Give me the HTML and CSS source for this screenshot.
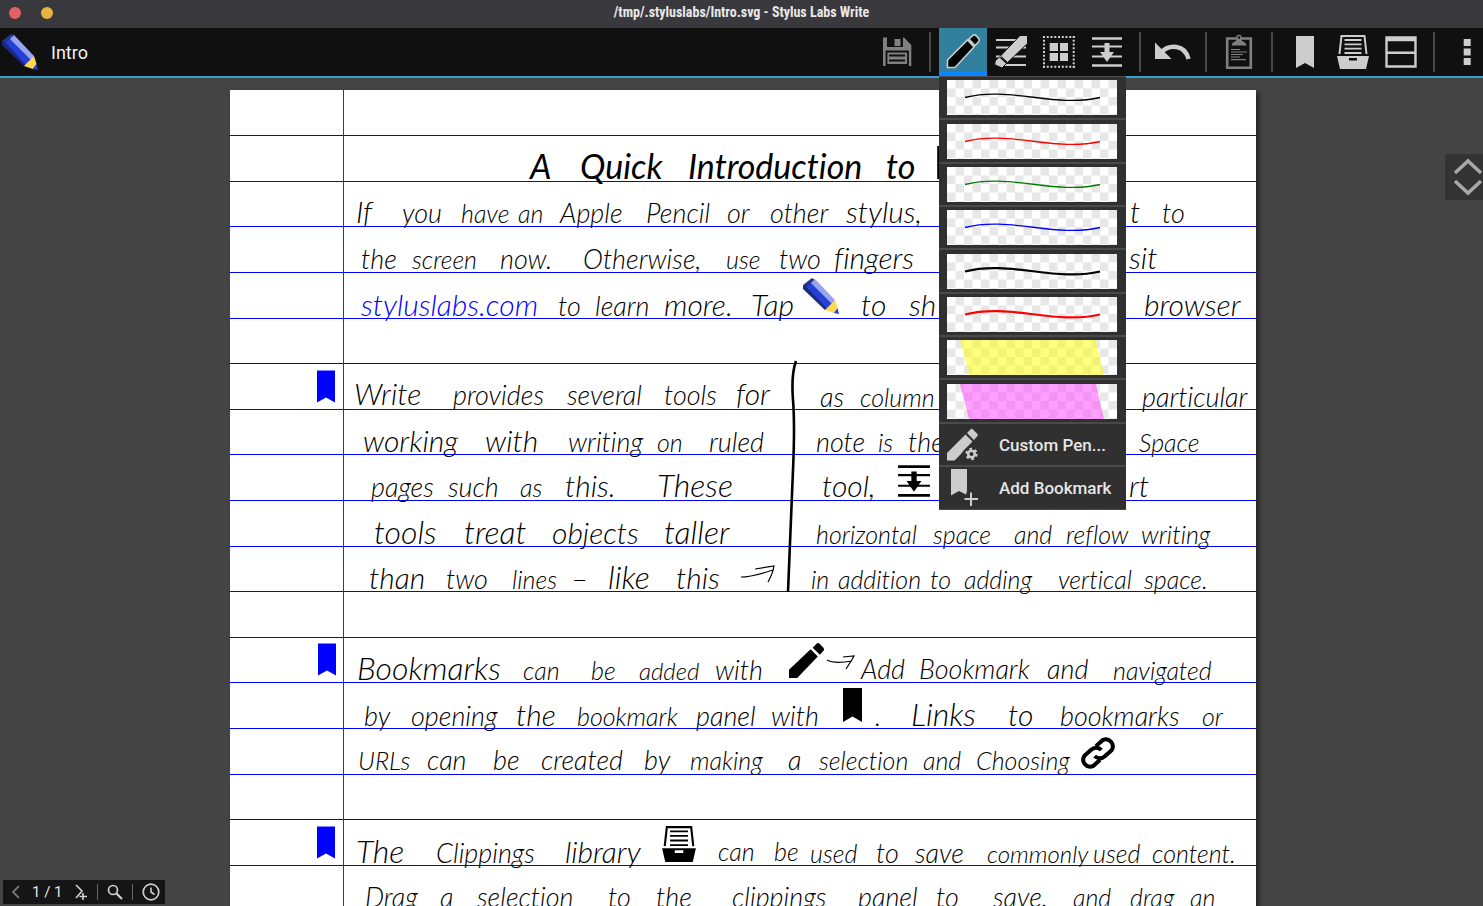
FILE: index.html
```html
<!DOCTYPE html>
<html lang="en">
<head>
<meta charset="utf-8">
<title>/tmp/.styluslabs/Intro.svg - Stylus Labs Write</title>
<link rel="stylesheet" href="styles.css">
</head>
<body>
<svg class="defs" aria-hidden="true">
  <defs>
    <pattern id="checker" width="17" height="17" patternUnits="userSpaceOnUse">
      <rect width="17" height="17" fill="#fff"/>
      <path d="M8.500 0H17V8.500H8.500zM0 8.500H8.500V17H0z" fill="#e7e7e7"/>
    </pattern>
    <symbol id="logo" viewBox="0 0 36 36">
      <path d="M0 7L9 0L12 2L4 10z" fill="#23358f"/>
      <path d="M4 9L9 4L30 26L22.500 32z" fill="#2540d6"/>
      <path d="M0 7L4 9L24 31L22 32L0 11z" fill="#1a2a80"/>
      <path d="M12 1L32 22L30 27L8 5z" fill="#98a5ee"/>
      <path d="M32 22L34.500 30L31 35L22 32L28 26z" fill="#ffd955"/>
      <path d="M34.500 30L36 36L31 35z" fill="#2540d6"/>
    </symbol>
    <symbol id="space" viewBox="0 0 32 32">
      <path d="M1 2.500H31M1 29.500H31" stroke="currentColor" stroke-width="2.500"/>
      <path d="M1 10.500H31M1 20.500H31" stroke="currentColor" stroke-width="2"/>
      <path d="M13.500 7H18.500V16H23L16 26L9 16H13.500z" fill="currentColor"/>
    </symbol>
    <symbol id="ribbon" viewBox="0 0 18 32">
      <path d="M0 0H18V32L9 27L0 32z" fill="currentColor"/>
    </symbol>
    <symbol id="tray" viewBox="0 0 34 35">
      <path d="M3.500 20L5.500 2H28.500L30.500 20" fill="none" stroke="currentColor" stroke-width="2"/>
      <path d="M8.500 6H25.500M8.500 10.300H25.500M8.500 14.700H25.500M8.500 19H25.500" stroke="currentColor" stroke-width="1.800"/>
      <path fill-rule="evenodd" d="M1 22H33L30 35H4zM13 24V26.500H21V24z" fill="currentColor"/>
    </symbol>
    <symbol id="pen" viewBox="0 0 34 34">
      <path d="M0 34V26L21 6L28 13L8 34zM23 4.500L27 .500Q28.500 -.500 30 1L33.500 4.500Q34.500 6 33.500 7.500L30 11.500z" fill="currentColor"/>
    </symbol>
  </defs>
</svg>

<div class="app">
  <header class="titlebar">
    <div class="lights"><button class="light close" aria-label="Close"></button><button class="light minimise" aria-label="Minimise"></button></div>
    <h1 class="window-title">/tmp/.styluslabs/Intro.svg - Stylus Labs Write</h1>
  </header>

  <nav class="toolbar" aria-label="Tools">
    <button class="home" aria-label="Documents"><svg width="36" height="36"><use href="#logo"/></svg></button>
    <span class="doc-name">Intro</span>
    <button class="tool dim" aria-label="Save"><svg viewBox="0 0 48 48">
      <path d="M10 9.500H31L38.300 17V38H10z" fill="currentColor"/>
      <path d="M14 9H30V19H14z" class="ground"/><path d="M21.500 11H27.500V18H21.500z" fill="currentColor"/>
      <path d="M13.500 23.500H35V37H13.500z" fill="currentColor" class="cut"/>
      <path d="M16 27.500H32M16 32.500H32" class="cut"/></svg></button>
    <span class="sep"></span>
    <div class="pen-holder">
      <button class="tool active" aria-label="Pen" aria-expanded="true"><svg viewBox="0 0 48 48">
        <path d="M8.500 39.500V32L28.500 12L35 19L16 39.500zM30 11L34.500 7Q35.500 6.500 37 7.500L40 11Q40.500 12.500 39.500 14L36 17.500z" fill="#000" stroke="#ccc" stroke-width="1.600"/></svg></button>
      <div class="menu">
        <button class="item" aria-label="Black fine pen"><svg class="swatch" viewBox="0 0 170 35" preserveAspectRatio="none"><rect width="170" height="35" fill="url(#checker)"/><path d="M18 17.500C62 6 108 28 153 17.500" class="ink" stroke="#000"/></svg></button>
        <button class="item" aria-label="Red fine pen"><svg class="swatch" viewBox="0 0 170 35" preserveAspectRatio="none"><rect width="170" height="35" fill="url(#checker)"/><path d="M18 17.500C62 6 108 28 153 17.500" class="ink" stroke="#f00"/></svg></button>
        <button class="item" aria-label="Green fine pen"><svg class="swatch" viewBox="0 0 170 35" preserveAspectRatio="none"><rect width="170" height="35" fill="url(#checker)"/><path d="M18 17.500C62 6 108 28 153 17.500" class="ink" stroke="#007d00"/></svg></button>
        <button class="item" aria-label="Blue fine pen"><svg class="swatch" viewBox="0 0 170 35" preserveAspectRatio="none"><rect width="170" height="35" fill="url(#checker)"/><path d="M18 17.500C62 6 108 28 153 17.500" class="ink" stroke="#00f"/></svg></button>
        <button class="item" aria-label="Black thick pen"><svg class="swatch" viewBox="0 0 170 35" preserveAspectRatio="none"><rect width="170" height="35" fill="url(#checker)"/><path d="M18 17.500C62 6 108 28 153 17.500" class="ink thick" stroke="#000"/></svg></button>
        <button class="item" aria-label="Red thick pen"><svg class="swatch" viewBox="0 0 170 35" preserveAspectRatio="none"><rect width="170" height="35" fill="url(#checker)"/><path d="M18 17.500C62 6 108 28 153 17.500" class="ink thick" stroke="#f00"/></svg></button>
        <button class="item" aria-label="Yellow highlighter"><svg class="swatch" viewBox="0 0 170 35" preserveAspectRatio="none"><rect width="170" height="35" fill="url(#checker)"/><path d="M13 0H149L157 35H22z" fill="#ff0" opacity=".5"/></svg></button>
        <button class="item" aria-label="Pink highlighter"><svg class="swatch" viewBox="0 0 170 35" preserveAspectRatio="none"><rect width="170" height="35" fill="url(#checker)"/><path d="M13 0H149L157 35H22z" fill="#ff40ff" opacity=".5"/></svg></button>
        <button class="item row"><svg width="34" height="34" viewBox="0 0 34 34"><path d="M0 32.500V25L18.500 6.500L25.500 13.500L17 22Q14 26 13 27L7.500 32.500zM20 5L24 1Q25 .500 26 1.500L30.500 6Q31 7 30.500 8L27 12z" fill="currentColor"/><circle cx="24.500" cy="26" r="3.300" fill="none" stroke="currentColor" stroke-width="2.600"/><circle cx="24.500" cy="26" r="5.200" fill="none" stroke="currentColor" stroke-width="2" stroke-dasharray="2.700 2.740"/></svg>Custom Pen...</button>
        <button class="item row"><svg width="34" height="34" viewBox="0 0 34 34"><path d="M4 -2H20V20L19 23.500L12 20L4 24.500z" fill="currentColor"/><path d="M17.500 28H31M24 21.500V35" stroke="currentColor" stroke-width="2"/></svg>Add Bookmark</button>
      </div>
    </div>
    <button class="tool" aria-label="Eraser"><svg viewBox="0 0 48 48">
      <path d="M9 12H39M9 19.500H39M9 28.500H39M9 37H39" stroke="currentColor" stroke-width="2"/>
      <path d="M33 7.500H40.500V15.500L20.500 34.500L13.500 28z" fill="currentColor" class="edge"/>
      <path d="M12.500 29L19.500 35.500L15 40L7.500 36.500L8.500 32.500z" fill="currentColor" class="edge"/></svg></button>
    <button class="tool" aria-label="Select"><svg viewBox="0 0 48 48">
      <path d="M8 9H40M8 38.700H40M9 8V40M38.700 8V40" stroke="currentColor" stroke-width="2" stroke-dasharray="2 1.750"/>
      <path d="M14.700 15H23V23H14.700zM25 15H33V23H25zM14.700 25H23V33H14.700zM25 25H33V33H25z" fill="currentColor"/></svg></button>
    <button class="tool" aria-label="Insert space"><svg viewBox="0 0 48 48"><use href="#space" x="8" y="8" width="32" height="32"/></svg></button>
    <span class="sep"></span>
    <button class="tool" aria-label="Undo"><svg viewBox="0 0 48 48"><path d="M6 14.500L22.500 31H6z" fill="currentColor"/><path d="M12 24.500C20 16 36 16 39.500 31" fill="none" stroke="currentColor" stroke-width="4.500"/></svg></button>
    <span class="sep"></span>
    <button class="tool dim" aria-label="Paste"><svg viewBox="0 0 48 48">
      <path d="M12.200 10.500H35.800V39.700H12.200z" fill="none" stroke="currentColor" stroke-width="2.600"/>
      <path d="M16.500 17.500Q17 14 21 13L22 10H26L27 13Q31 14 31.500 17.500z" fill="currentColor"/><circle cx="24" cy="9.500" r="2" fill="#101010" stroke="currentColor" stroke-width="1.400"/>
      <path d="M16 21.500H25M16 24H32M16 26.500H28M16 29H25M16 31.700H31" stroke="currentColor" stroke-width="1.200"/></svg></button>
    <span class="sep"></span>
    <button class="tool" aria-label="Bookmarks"><svg viewBox="0 0 48 48"><use href="#ribbon" x="15" y="8" width="18" height="32"/></svg></button>
    <button class="tool" aria-label="Clippings"><svg viewBox="0 0 48 48"><use href="#tray" x="7" y="6" width="34" height="35"/></svg></button>
    <button class="tool" aria-label="Split view"><svg viewBox="0 0 48 48"><path d="M9.500 9.500H38.500V38.500H9.500zM9 12H39M9 24.700H39" fill="none" stroke="currentColor" stroke-width="2.400"/></svg></button>
    <span class="sep"></span>
    <button class="tool overflow" aria-label="More"><svg viewBox="0 0 48 48"><path d="M20.700 11H27.700V18H20.700zM20.700 20.500H27.700V27.500H20.700zM20.700 30H27.700V37H20.700z" fill="currentColor"/></svg></button>
  </nav>

  <main class="desk">
    <article class="page">
      <svg class="sheet" viewBox="230 90 1026 816">
        <path class="rule" d="M230 135.500H1256M230 181.500H1256M230 226.500H1256M230 272.500H1256M230 318.500H1256M230 363.500H1256M230 409.500H1256M230 454.500H1256M230 500.500H1256M230 546.500H1256M230 591.500H1256M230 637.500H1256M230 682.500H1256M230 728.500H1256M230 774.500H1256M230 819.500H1256M230 865.500H1256"/>
        <path class="margin" d="M343.500 90V906"/>

        <g class="title"><text x="530" y="179">A</text><text x="580" y="179">Quick</text><text x="688" y="179">Introduction</text><text x="886" y="179">to</text></g>
        <path class="stroke heavy" d="M938.500 146V179"/>

        <g class="m"><text x="356" y="223" class="l">If</text><text x="402" y="223">you</text><text x="461" y="223" class="s">have</text><text x="518" y="223" class="s">an</text><text x="560" y="223">Apple</text><text x="646" y="223">Pencil</text><text x="727" y="223">or</text><text x="770" y="223">other</text><text x="846" y="223" class="l">stylus,</text><text x="1130" y="223" class="l">t</text><text x="1162" y="223">to</text></g>
        <g class="m"><text x="361" y="269">the</text><text x="412" y="269" class="s">screen</text><text x="500" y="269">now.</text><text x="583" y="269">Otherwise,</text><text x="726" y="269" class="s">use</text><text x="779" y="269">two</text><text x="834" y="269" class="l">fingers</text><text x="1129" y="269" class="l">sit</text></g>
        <g class="m"><a href="https://styluslabs.com" class="link"><text x="361" y="316" class="l">styluslabs.com</text></a><text x="558" y="316">to</text><text x="595" y="316">learn</text><text x="664" y="316" class="l">more.</text><text x="751" y="316" class="l">Tap</text><text x="861" y="316" class="l">to</text><text x="909" y="316" class="l">sh</text><text x="1144" y="316" class="l">browser</text></g>
        <use href="#logo" x="803" y="278" width="36" height="36"/>

        <g class="m"><text x="354" y="405" class="l">Write</text><text x="453" y="405">provides</text><text x="567" y="405">several</text><text x="664" y="405">tools</text><text x="736" y="405" class="l">for</text><text x="820" y="407">as</text><text x="860" y="407" class="s">column</text><text x="1142" y="407">particular</text></g>
        <g class="m"><text x="363" y="452" class="l">working</text><text x="485" y="452" class="l">with</text><text x="568" y="452">writing</text><text x="657" y="452" class="s">on</text><text x="709" y="452">ruled</text><text x="816" y="452">note</text><text x="878" y="452" class="s">is</text><text x="908" y="452">the</text><text x="1139" y="452" class="s">Space</text></g>
        <g class="m"><text x="371" y="497">pages</text><text x="448" y="497">such</text><text x="520" y="497" class="s">as</text><text x="565" y="497" class="l">this.</text><text x="657" y="497" class="xl">These</text><text x="822" y="497" class="l">tool,</text><text x="1129" y="497" class="l">rt</text></g>
        <g class="m"><text x="374" y="544" class="xl">tools</text><text x="464" y="544" class="xl">treat</text><text x="552" y="544" class="l">objects</text><text x="664" y="544" class="xl">taller</text><text x="816" y="544" class="s">horizontal</text><text x="933" y="544" class="s">space</text><text x="1014" y="544" class="s">and</text><text x="1066" y="544" class="s">reflow</text><text x="1141" y="544" class="s">writing</text></g>
        <g class="m"><text x="369" y="589" class="l">than</text><text x="446" y="589">two</text><text x="512" y="589" class="s">lines</text><text x="571" y="589" class="l">–</text><text x="608" y="589" class="xl">like</text><text x="676" y="589" class="l">this</text><text x="811" y="589" class="s">in</text><text x="838" y="589" class="s">addition</text><text x="930" y="589" class="s">to</text><text x="964" y="589" class="s">adding</text><text x="1058" y="589" class="s">vertical</text><text x="1144" y="589" class="s">space.</text></g>
        <path class="stroke" d="M741 577Q752 577 773 570M755 569L774 566Q773 573 768 582"/>
        <path class="stroke heavy" d="M796 361Q791 375 793 400T793 470T788 592"/>
        <use href="#space" class="mark" x="897" y="463" width="34" height="36"/>

        <g class="m"><text x="357" y="680" class="xl">Bookmarks</text><text x="523" y="680" class="s">can</text><text x="591" y="680" class="s">be</text><text x="639" y="680" class="xs">added</text><text x="715" y="680">with</text><text x="861" y="679">Add</text><text x="919" y="679">Bookmark</text><text x="1047" y="679">and</text><text x="1113" y="680" class="s">navigated</text></g>
        <use href="#pen" class="mark" x="789" y="643" width="35" height="35"/>
        <path class="stroke" d="M827 660Q834 664 852 661M843 657L854 656Q850 663 846 669"/>
        <g class="m"><text x="364" y="726">by</text><text x="411" y="726">opening</text><text x="516" y="726" class="l">the</text><text x="577" y="726" class="s">bookmark</text><text x="696" y="726">panel</text><text x="771" y="726">with</text><text x="875" y="726">.</text><text x="911" y="726" class="xl">Links</text><text x="1008" y="726" class="l">to</text><text x="1060" y="726">bookmarks</text><text x="1202" y="726" class="s">or</text></g>
        <use href="#ribbon" class="mark" x="843" y="688" width="19" height="34"/>
        <g class="m"><text x="358" y="770" class="s">URLs</text><text x="427" y="770">can</text><text x="493" y="770">be</text><text x="541" y="770">created</text><text x="644" y="770">by</text><text x="690" y="770" class="s">making</text><text x="788" y="770">a</text><text x="819" y="770" class="s">selection</text><text x="923" y="770" class="s">and</text><text x="976" y="770" class="s">Choosing</text></g>
        <g class="chain" transform="translate(1098 753) rotate(-42)"><path d="M-3 6.500H-12A7 7 0 0 1 -12 -7H-3A7 7 0 0 1 4.500 0M3 -6.500H12A7 7 0 0 1 12 7H3A7 7 0 0 1 -4.500 0"/></g>

        <g class="m"><text x="356" y="863" class="xl">The</text><text x="436" y="863">Clippings</text><text x="565" y="863" class="l">library</text><text x="718" y="861" class="s">can</text><text x="774" y="861" class="s">be</text><text x="810" y="863" class="s">used</text><text x="876" y="863">to</text><text x="915" y="863">save</text><text x="987" y="863" class="xs">commonly</text><text x="1093" y="863" class="s">used</text><text x="1152" y="863" class="s">content.</text></g>
        <use href="#tray" class="mark" x="661" y="825" width="36" height="37"/>
        <g class="m"><text x="365" y="907">Drag</text><text x="440" y="907">a</text><text x="477" y="907">selection</text><text x="608" y="907">to</text><text x="656" y="907">the</text><text x="732" y="907">clippings</text><text x="858" y="907">panel</text><text x="936" y="907">to</text><text x="993" y="907">save,</text><text x="1073" y="907" class="s">and</text><text x="1130" y="907" class="s">drag</text><text x="1190" y="907" class="s">an</text></g>

        <use href="#ribbon" class="flag" x="317" y="370" width="18" height="33"/>
        <use href="#ribbon" class="flag" x="318" y="643" width="18" height="33"/>
        <use href="#ribbon" class="flag" x="317" y="826" width="18" height="33"/>
      </svg>
    </article>

    <button class="scroller" aria-label="Scroll"><svg width="30" height="38" viewBox="0 0 30 38"><path d="M2 15L15 3L28 15M2 23L15 35L28 23" fill="none" stroke="#a8a8a8" stroke-width="3.500"/></svg></button>

    <div class="status">
      <button aria-label="Previous page" class="faint"><svg width="10" height="14" viewBox="0 0 10 14"><path d="M8 1L2 7L8 13" fill="none" stroke="currentColor" stroke-width="1.800"/></svg></button>
      <span class="count">1 / 1</span>
      <button aria-label="Next page"><svg width="14" height="18" viewBox="0 0 14 18"><path d="M2 2L8 8L2 15M9 10V17M5.500 13.500H13" fill="none" stroke="currentColor" stroke-width="1.600"/></svg></button>
      <span class="bar"></span>
      <button aria-label="Zoom"><svg width="16" height="16" viewBox="0 0 16 16"><path d="M9.500 9.500L15 15" stroke="currentColor" stroke-width="2.200"/><circle cx="6" cy="6" r="4.500" fill="none" stroke="currentColor" stroke-width="1.700"/></svg></button>
      <span class="bar"></span>
      <button aria-label="History"><svg width="18" height="18" viewBox="0 0 18 18"><circle cx="9" cy="9" r="7.800" fill="none" stroke="currentColor" stroke-width="1.700"/><path d="M9 4.500V9L12.500 11.500" fill="none" stroke="currentColor" stroke-width="1.600"/></svg></button>
    </div>
  </main>
</div>
</body>
</html>
```
FILE: styles.css
```css
* { box-sizing: border-box; }
body { margin: 0; font-family: Roboto, "Liberation Sans", sans-serif; background: #444; color: #e6e6e6; }
button { border: 0; margin: 0; padding: 0; background: none; color: inherit; font: inherit; cursor: pointer; }
svg { display: block; }
.defs { position: absolute; width: 0; height: 0; }
.app { height: 100vh; display: flex; flex-direction: column; overflow: hidden; }

.titlebar { flex: none; height: 28px; display: grid; grid-template-columns: 1fr auto 1fr; align-items: center; background: #38383d; padding: 0 9px 4px; }
.lights { display: flex; gap: 20px; padding-top: 2px; }
.light { width: 12px; height: 12px; border-radius: 50%; }
.close { background: #e55f66; }
.minimise { background: #e8b63a; }
.window-title { margin: 0; font-family: "Roboto Condensed", Roboto, sans-serif; font-size: 14px; line-height: 20px; font-weight: 700; color: #e8e8e8; }

.toolbar { flex: none; display: flex; align-items: center; background: #101010; border-bottom: 2px solid #33a2cf; position: relative; z-index: 2; color: #cdcdcd; }
.home { padding: 0 2px; }
.doc-name { flex: 1; padding-left: 11px; font-size: 18px; color: #f0f0f0; }
.tool { display: block; flex: none; width: 48px; height: 48px; }
.tool svg { width: 48px; height: 48px; }
.tool.dim { color: #808080; }
.tool.overflow { width: 40px; overflow: hidden; }
.tool.active { background: #31809e; box-shadow: inset 0 -4px #0a84ff; }
.ground { fill: #101010; }
.cut { stroke: #101010; stroke-width: 1.8px; }
.edge { stroke: #101010; stroke-width: 1px; }
.sep { flex: none; width: 2px; height: 40px; margin: 0 8px; background: #4a4a4a; }

.pen-holder { position: relative; }
.menu { position: absolute; top: 100%; left: 0; display: flex; flex-direction: column; background: #303030; border-top: 1px solid #505050; width: 187px; }
.item { height: 43px; padding: 3px 9px 3px 8px; border-bottom: 2px solid #4a4a4a; text-align: left; }
.item:nth-child(3n+2) { height: 44px; }
.item:last-child { border-bottom-width: 1px; }
.swatch { width: 100%; height: 35px; }
.ink { fill: none; stroke-width: 1.3px; }
.thick { stroke-width: 2.2px; }
.row { display: flex; align-items: center; gap: 18px; font-size: 17px; font-weight: 500; color: #e6e6e6; white-space: nowrap; }
.row svg { flex: none; color: #cdcdcd; overflow: visible; }

.desk { flex: 1; min-height: 0; position: relative; overflow: hidden; padding: 12px 0 0 3px; }
.page { max-width: 1026px; margin: 0 auto; background: #fff; box-shadow: 3px 3px 4px #222; }
.sheet { width: 100%; height: auto; overflow: hidden; }
.rule { stroke: #0000ff; stroke-width: 1px; }
.margin { stroke: #d00000; stroke-width: 1px; }
.sheet text { fill: #000; font-family: Lato, "Open Sans", sans-serif; font-style: italic; font-weight: 300; font-variant-ligatures: none; }
.title text { font-size: 34px; font-weight: 400; }
.m text { font-size: 27px; }
.m .xs { font-size: 24px; }
.m .s { font-size: 25px; }
.m .l { font-size: 30px; }
.m .xl { font-size: 32px; }
.sheet .link text { fill: #00f; }
.mark { color: #000; }
.flag { color: #00f; }
.stroke { fill: none; stroke: #000; stroke-width: 1.2px; }
.heavy { stroke-width: 2.6px; }
.chain { fill: none; stroke: #000; stroke-width: 4px; }

.scroller { position: absolute; right: 0; top: 76px; width: 38px; height: 46px; padding-left: 8px; background: #333; overflow: hidden; }
.status { position: absolute; left: 3px; bottom: 2px; height: 24px; display: flex; align-items: center; gap: 9px; padding: 0 5px 0 8px; background: #151515; color: #d0d0d0; font-size: 15px; }
.faint { color: #777; }
.count { padding: 0 2px; white-space: pre; color: #e6e6e6; }
.bar { width: 1px; height: 16px; background: #666; }
```
